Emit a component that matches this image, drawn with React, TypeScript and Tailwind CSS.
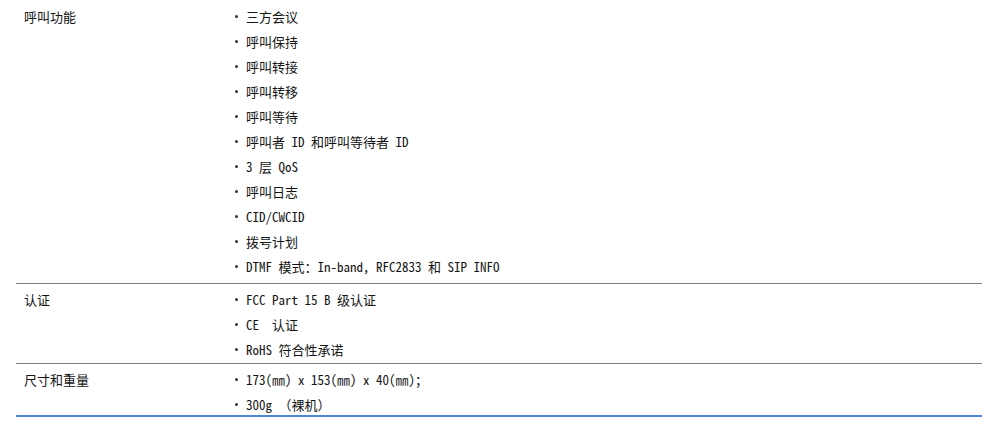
const sections = [
    {
        label: "呼叫功能",
        box: "pt-[4px] pb-[4px] border-b border-[#808080]",
        items: [
            "三方会议",
            "呼叫保持",
            "呼叫转接",
            "呼叫转移",
            "呼叫等待",
            "呼叫者 ID 和呼叫等待者 ID",
            "3 层 QoS",
            "呼叫日志",
            "CID/CWCID",
            "拨号计划",
            "DTMF 模式：In-band，RFC2833 和 SIP INFO",
        ],
    },
    {
        label: "认证",
        box: "pt-[3px] pb-[1px] border-b border-[#808080]",
        items: ["FCC Part 15 B 级认证", "CE  认证", "RoHS 符合性承诺"],
    },
    {
        label: "尺寸和重量",
        box: "pt-[3px] h-[53px] border-b-2 border-[#4f86d6]",
        items: ["173(㎜) x 153(㎜) x 40(㎜)；", "300g （裸机）"],
    },
];

// full-width punctuation keeps its normal width, Latin goes half-width
const Text = ({ value }: { value: string }) => {
    const parts = value.split(/([：，（）；])/);
    return (
        <span>
            {parts.map((part, i) =>
                /^[：，（）；]$/.test(part) ? (
                    <span key={i} className="[font-feature-settings:normal]">
                        {part}
                    </span>
                ) : (
                    <span key={i}>{part}</span>
                )
            )}
        </span>
    );
};

const App = () => {
    return (
        <div className="w-[1000px] h-[424px] bg-white overflow-hidden">
            <div className="ml-[16px] w-[966px] text-[13px] text-[#141414] font-['Noto_Sans_CJK_SC',sans-serif] [font-feature-settings:'hwid']">
                {sections.map((section) => (
                    <div key={section.label} className={`flex ${section.box}`}>
                        <div className="w-[216px] pl-[8px] h-[25px] leading-[25px]">
                            {section.label}
                        </div>
                        <ul className="flex-1">
                            {section.items.map((item) => (
                                <li
                                    key={item}
                                    className="flex items-center h-[25px] whitespace-pre"
                                >
                                    <span className="w-[14px] flex-shrink-0">
                                        <span className="block ml-[3px] w-[3px] h-[3px] rounded-full bg-[#333]"></span>
                                    </span>
                                    <Text value={item} />
                                </li>
                            ))}
                        </ul>
                    </div>
                ))}
            </div>
        </div>
    );
};

export default App;
